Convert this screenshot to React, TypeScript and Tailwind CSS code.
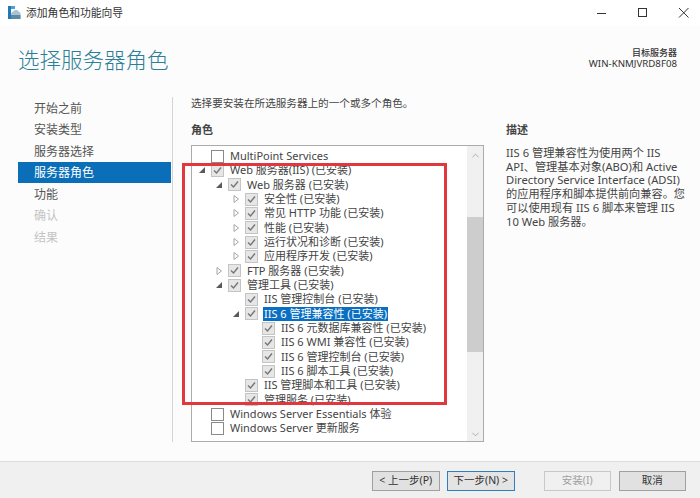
import { ChevronDown, ChevronUp } from "lucide-react";

type Row = {
  label: string;
  level: number;
  arrow?: "open" | "closed";
  checked?: boolean;
  selected?: boolean;
};

const steps = [
  { label: "开始之前" },
  { label: "安装类型" },
  { label: "服务器选择" },
  { label: "服务器角色", active: true },
  { label: "功能" },
  { label: "确认", disabled: true },
  { label: "结果", disabled: true },
];

const rows: Row[] = [
  { label: "MultiPoint Services", level: 0 },
  { label: "Web 服务器(IIS) (已安装)", level: 0, arrow: "open", checked: true },
  { label: "Web 服务器 (已安装)", level: 1, arrow: "open", checked: true },
  { label: "安全性 (已安装)", level: 2, arrow: "closed", checked: true },
  { label: "常见 HTTP 功能 (已安装)", level: 2, arrow: "closed", checked: true },
  { label: "性能 (已安装)", level: 2, arrow: "closed", checked: true },
  { label: "运行状况和诊断 (已安装)", level: 2, arrow: "closed", checked: true },
  { label: "应用程序开发 (已安装)", level: 2, arrow: "closed", checked: true },
  { label: "FTP 服务器 (已安装)", level: 1, arrow: "closed", checked: true },
  { label: "管理工具 (已安装)", level: 1, arrow: "open", checked: true },
  { label: "IIS 管理控制台 (已安装)", level: 2, checked: true },
  { label: "IIS 6 管理兼容性 (已安装)", level: 2, arrow: "open", checked: true, selected: true },
  { label: "IIS 6 元数据库兼容性 (已安装)", level: 3, checked: true },
  { label: "IIS 6 WMI 兼容性 (已安装)", level: 3, checked: true },
  { label: "IIS 6 管理控制台 (已安装)", level: 3, checked: true },
  { label: "IIS 6 脚本工具 (已安装)", level: 3, checked: true },
  { label: "IIS 管理脚本和工具 (已安装)", level: 2, checked: true },
  { label: "管理服务 (已安装)", level: 2, checked: true },
  { label: "Windows Server Essentials 体验", level: 0 },
  { label: "Windows Server 更新服务", level: 0 },
];

function TreeArrow({ type }: { type?: "open" | "closed" }) {
  if (!type) return <span className="w-[8px] shrink-0" />;
  return (
    <svg width="8" height="8" viewBox="0 0 8 8" className="shrink-0">
      {type === "open" ? (
        <path d="M7 1V7H1Z" fill="#595959" />
      ) : (
        <path d="M2 0.5L6.5 4L2 7.5Z" fill="#fff" stroke="#a6a6a6" />
      )}
    </svg>
  );
}

function CheckBox({ checked }: { checked?: boolean }) {
  if (!checked) {
    return <span className="ml-[5px] block h-[13px] w-[13px] shrink-0 border border-[#8a8a8a] bg-white" />;
  }
  return (
    <span className="ml-[5px] flex h-[13px] w-[13px] shrink-0 items-center justify-center border border-[#c4c4c4] bg-[#e6e6e6]">
      <svg width="11" height="11" viewBox="0 0 11 11">
        <path d="M2 5.5L4.5 8L9 2.5" fill="none" stroke="#767676" strokeWidth="1.4" />
      </svg>
    </span>
  );
}

function TreeRow({ row }: { row: Row }) {
  const pad = ["pl-[6px]", "pl-[23px]", "pl-[40px]", "pl-[57px]"][row.level];
  return (
    <div className={`flex h-[14.33px] items-center ${pad}`}>
      <TreeArrow type={row.arrow} />
      <CheckBox checked={row.checked} />
      <span
        className={`ml-[5px] whitespace-nowrap px-[1px] text-[11px] leading-[14px] ${
          row.selected ? "bg-[#0a6fc2] text-white" : "text-[#444]"
        }`}
      >
        {row.label}
      </span>
    </div>
  );
}

function WizardButton({ label, variant }: { label: string; variant?: "primary" | "disabled" }) {
  const look =
    variant === "primary"
      ? "border-[#2f7fbf] bg-[#e4e4e4] text-[#333]"
      : variant === "disabled"
        ? "border-[#c8c8c8] bg-[#f0f0f0] text-[#a0a0a0]"
        : "border-[#a0a0a0] bg-[#e1e1e1] text-[#333]";
  return (
    <button className={`flex h-[20px] w-[67.5px] items-center justify-center border text-[10.5px] ${look}`}>
      {label}
    </button>
  );
}

export default function App() {
  return (
    <div className="flex h-[498px] w-[700px] flex-col overflow-hidden bg-[#fcfcfc] font-['Noto_Sans','Noto_Sans_CJK_SC',sans-serif] text-[11.5px] text-[#444]">
      {/* title bar */}
      <div className="flex h-[26px] items-center bg-white pl-[8px]">
        <svg width="13" height="14" viewBox="0 0 13 14">
          <rect x="0" y="0" width="3" height="13" fill="#1f7ab8" />
          <rect x="3" y="0" width="4" height="3" fill="#4f9fd0" />
          <path d="M3 7L7 4H9L12.5 7V13H3Z" fill="#a8c4d4" />
          <rect x="3" y="9" width="9.5" height="4" fill="#5f8aa5" />
        </svg>
        <span className="ml-[5px] text-[10.8px] text-[#333]">添加角色和功能向导</span>
        <div className="ml-auto flex items-center">
          <svg width="12" height="12" viewBox="0 0 12 12" className="mr-[29px]">
            <path d="M1 6.5H10" stroke="#333" />
          </svg>
          <svg width="12" height="12" viewBox="0 0 12 12" className="mr-[29px]">
            <rect x="1.5" y="1.5" width="8" height="8" fill="none" stroke="#333" />
          </svg>
          <svg width="12" height="12" viewBox="0 0 12 12" className="mr-[10px]">
            <path d="M1 1L10.5 10.5M10.5 1L1 10.5" stroke="#333" />
          </svg>
        </div>
      </div>

      {/* header */}
      <div className="flex h-[71px] items-start justify-between pl-[18px] pr-[23px]">
        <h1 className="mt-[15px] text-[21.5px] font-light leading-[38px] text-[#2b7f96]">选择服务器角色</h1>
        <div className="mt-[21px] text-right text-[#333]">
          <div className="h-[11px] text-[9px] font-medium leading-[11px]">目标服务器</div>
          <div className="h-[12px] text-[9.7px] leading-[12px]">WIN-KNMJVRD8F08</div>
        </div>
      </div>

      {/* body */}
      <div className="flex h-[364px]">
        <nav className="w-[172px] pl-[18px] text-[12px]">
          {steps.map((s) => (
            <div
              key={s.label}
              className={`flex h-[21.5px] w-[153px] items-center pl-[16px] pt-[2px] ${
                s.active ? "bg-[#0a6fb8] text-white" : s.disabled ? "text-[#c4c4c4]" : "text-[#555]"
              }`}
            >
              {s.label}
            </div>
          ))}
        </nav>

        <div className="h-[345px] w-[510px] border-l border-[#d4d4d4] pl-[18px]">
          <p className="mt-[-1px] h-[14px] text-[10.6px] leading-[14px] text-[#444]">选择要安装在所选服务器上的一个或多个角色。</p>

          <div className="mt-[13px] flex">
            <div className="w-[293px] shrink-0">
              <div className="h-[22px] text-[11px] font-bold leading-[14px]">角色</div>
              <div className="flex h-[297px] border border-[#ababab] bg-white">
                <div className="flex-1 overflow-hidden pt-[3px]">
                  {rows.map((r) => (
                    <TreeRow key={r.label} row={r} />
                  ))}
                </div>
                <div className="flex w-[16px] flex-col items-center bg-[#f0f0f0]">
                  <ChevronUp size={11} className="mt-[4px] text-[#a6a6a6]" />
                  <div className="mt-[56px] h-[135px] w-full bg-[#cdcdcd]" />
                  <ChevronDown size={11} className="mt-auto mb-[1px] text-[#a6a6a6]" />
                </div>
              </div>
            </div>

            <div className="ml-[22px] w-[180px] shrink-0">
              <div className="h-[16px] text-[11px] font-bold leading-[14px]">描述</div>
              <p className="mt-[7px] whitespace-nowrap text-[11.2px] leading-[13.7px] text-[#444]">
                IIS 6 管理兼容性为使用两个 IIS
                <br />
                API、管理基本对象(ABO)和 Active
                <br />
                Directory Service Interface (ADSI)
                <br />
                的应用程序和脚本提供前向兼容。您
                <br />
                可以使用现有 IIS 6 脚本来管理 IIS
                <br />
                10 Web 服务器。
              </p>
            </div>
          </div>
        </div>
      </div>

      {/* footer */}
      <div className="flex flex-1 items-center justify-end border-t border-[#dcdcdc] bg-[#f0f0f0] pr-[14px] pt-[2px]">
        <div className="flex gap-[7.5px]">
          <WizardButton label="< 上一步(P)" />
          <WizardButton label="下一步(N) >" variant="primary" />
        </div>
        <div className="ml-[29px] flex gap-[7.5px]">
          <WizardButton label="安装(I)" variant="disabled" />
          <WizardButton label="取消" />
        </div>
      </div>

      {/* annotation drawn on top of the screenshot */}
      <div className="absolute left-[182px] top-[163px] h-[242px] w-[265px] border-[3px] border-[#e0383e]" />
    </div>
  );
}
